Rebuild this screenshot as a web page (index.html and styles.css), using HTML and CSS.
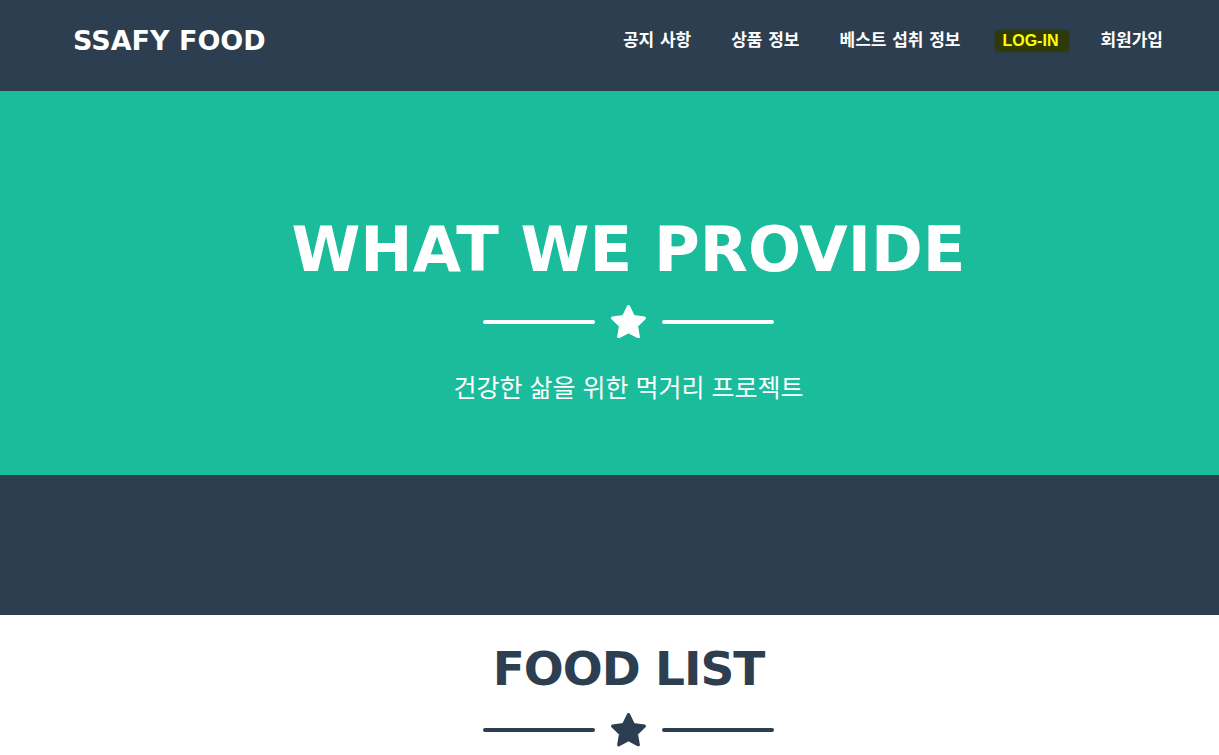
FILE: index.html
```html
<!DOCTYPE html>
<html lang="ko">
<head>
<meta charset="utf-8">
<title>SSAFY FOOD</title>
<link rel="stylesheet" href="styles.css">
</head>
<body>
<header class="navbar">
  <a class="brand" href="#">SSAFY FOOD</a>
  <nav class="nav">
    <a class="nav-link" href="#">공지 사항</a>
    <a class="nav-link" href="#">상품 정보</a>
    <a class="nav-link" href="#">베스트 섭취 정보</a>
    <a class="nav-link login" href="#">LOG-IN</a>
    <a class="nav-link" href="#">회원가입</a>
  </nav>
</header>

<section class="hero">
  <h1 class="hero-title">WHAT WE PROVIDE</h1>
  <div class="divider divider-light">
    <span class="divider-line"></span>
    <svg class="divider-star" viewBox="4 6 92 88" aria-hidden="true"><polygon points="50,10 62.9,36.2 91.8,40.4 70.9,60.8 75.9,89.6 50,76 24.1,89.6 29.1,60.8 8.2,40.4 37.1,36.2"/></svg>
    <span class="divider-line"></span>
  </div>
  <p class="hero-sub">건강한 삶을 위한 먹거리 프로젝트</p>
</section>

<section class="band"></section>

<section class="list">
  <h2 class="list-title">FOOD LIST</h2>
  <div class="divider divider-dark">
    <span class="divider-line"></span>
    <svg class="divider-star" viewBox="4 6 92 88" aria-hidden="true"><polygon points="50,10 62.9,36.2 91.8,40.4 70.9,60.8 75.9,89.6 50,76 24.1,89.6 29.1,60.8 8.2,40.4 37.1,36.2"/></svg>
    <span class="divider-line"></span>
  </div>
</section>
</body>
</html>
```

FILE: styles.css
```css
* { box-sizing: border-box; }
html, body { margin: 0; padding: 0; }
body {
  background: #ffffff;
  font-family: "DejaVu Sans", "Noto Sans CJK KR", sans-serif;
  overflow: hidden;
}

.navbar {
  height: 91px;
  background: #2c3e50;
  display: flex;
  align-items: center;
  justify-content: space-between;
  padding: 0 56px 11px 73px;
}
.brand {
  color: #ffffff;
  text-decoration: none;
  font-family: "DejaVu Sans", sans-serif;
  font-weight: 700;
  font-size: 27px;
  line-height: 1;
}
.nav {
  display: flex;
  align-items: center;
  gap: 40px;
  margin-bottom: -1px;
}
.nav-link {
  color: #ffffff;
  text-decoration: none;
  font-family: "Liberation Sans", "Noto Sans CJK KR", sans-serif;
  font-weight: 700;
  font-size: 17px;
  word-spacing: 1px;
  line-height: 18px;
}
.login {
  color: #ffff00;
  font-size: 16px;
  background: #2f3a07;
  box-shadow: 0 0 2px 1px #2f3a07;
  padding: 1px 10px 1px 6px;
  margin: 0 -8px 0 -4px;
  border-radius: 2px;
}

.hero {
  height: 384px;
  background: #1abc9c;
  padding: 128px 0 0 38px;
  display: flex;
  flex-direction: column;
  align-items: center;
  color: #ffffff;
}
.hero-title {
  margin: 0;
  font-family: "DejaVu Sans", sans-serif;
  font-weight: 700;
  font-size: 62.5px;
  line-height: 1;
}
.divider {
  display: flex;
  align-items: center;
  height: 36px;
  gap: 16px;
}
.hero .divider { margin-top: 22px; }
.divider-line {
  width: 112px;
  height: 4px;
  border-radius: 2px;
}
.divider-star {
  width: 35px;
  height: 33.5px;
  stroke-width: 8;
  stroke-linejoin: round;
}
.divider-light .divider-line { background: #ffffff; }
.divider-light .divider-star { fill: #ffffff; stroke: #ffffff; }
.divider-dark .divider-line { background: #2c3e50; }
.divider-dark .divider-star { fill: #2c3e50; stroke: #2c3e50; }

.hero-sub {
  margin: 28px 0 0;
  font-family: "Noto Sans CJK KR", sans-serif;
  font-weight: 400;
  font-size: 25px;
  line-height: 36px;
}

.band {
  height: 140px;
  background: #2c3e50;
}

.list {
  padding: 30px 0 0 38px;
  display: flex;
  flex-direction: column;
  align-items: center;
}
.list-title {
  margin: 0;
  color: #2c3e50;
  font-family: "DejaVu Sans", sans-serif;
  font-weight: 700;
  font-size: 47px;
  letter-spacing: -1px;
  line-height: 1;
}
.list .divider { margin-top: 20px; }
```
